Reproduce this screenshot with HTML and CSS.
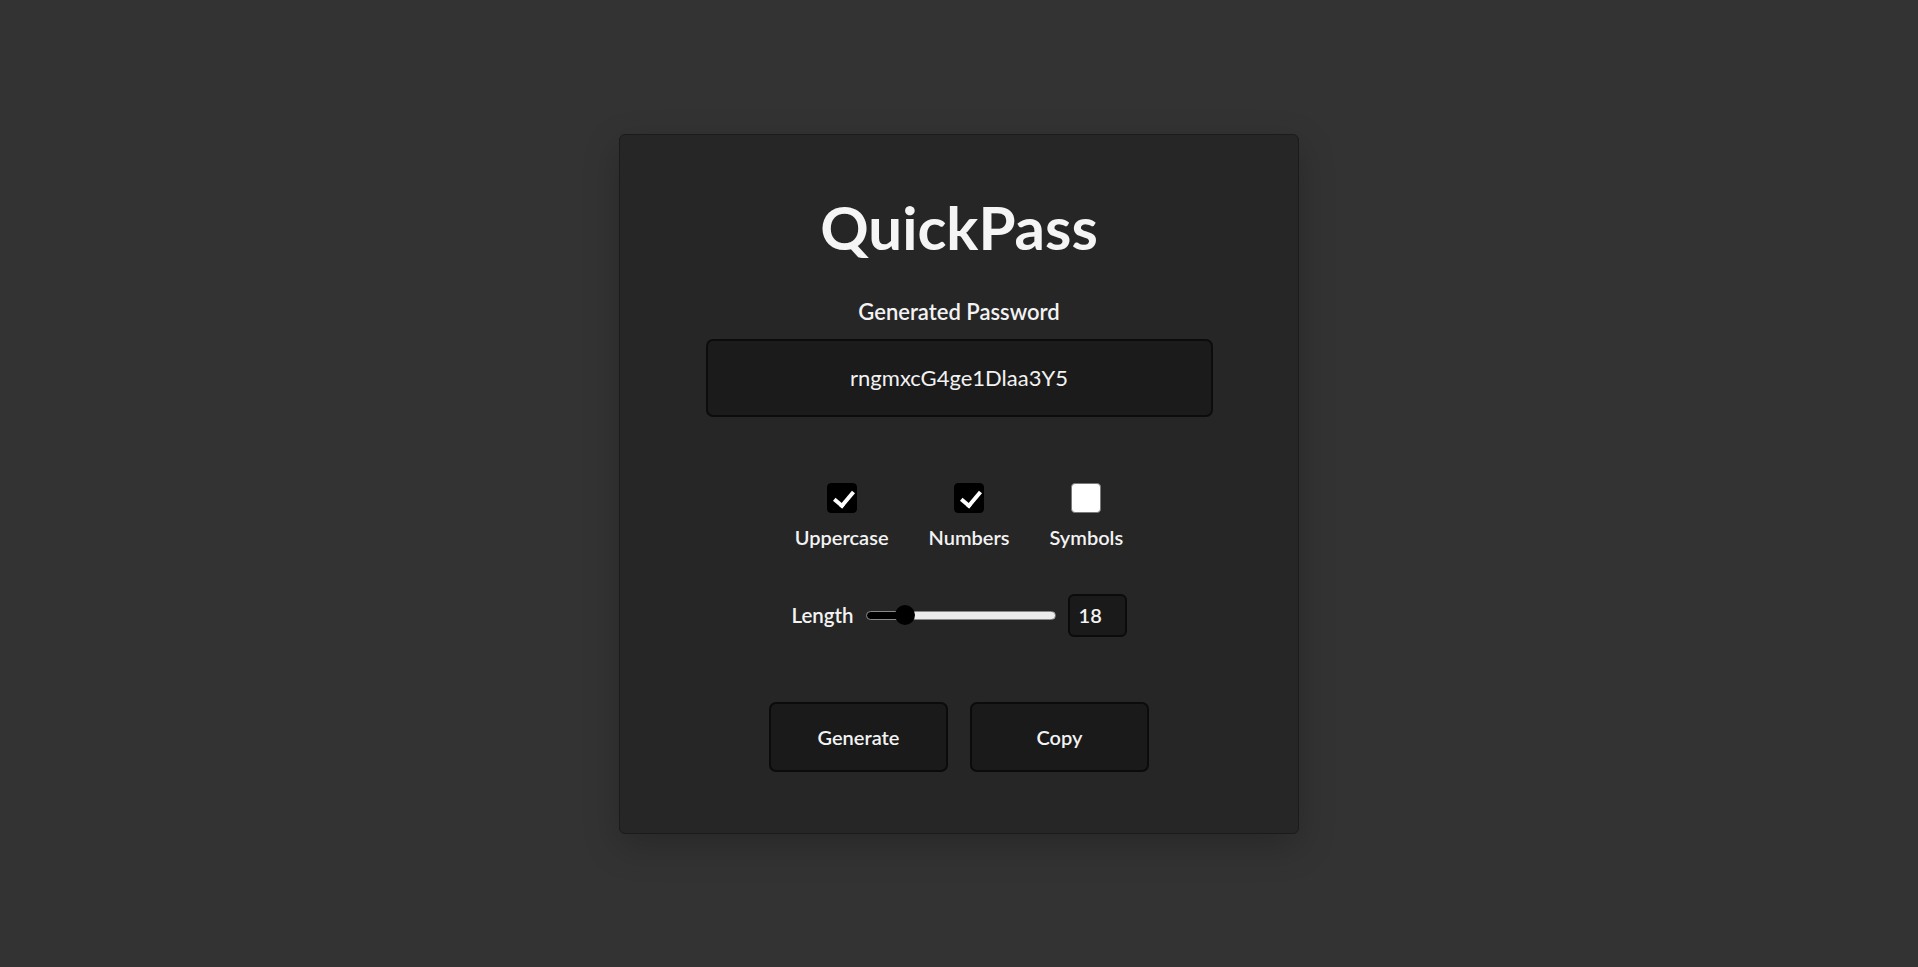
FILE: index.html
```html
<!DOCTYPE html>
<html lang="en">
<head>
<meta charset="utf-8">
<title>QuickPass</title>
<link rel="stylesheet" href="styles.css">
</head>
<body>
  <main class="card">
    <h1 class="title">QuickPass</h1>
    <p class="field-label">Generated Password</p>
    <div class="password-box">rngmxcG4ge1Dlaa3Y5</div>

    <div class="options">
      <label class="option">
        <input type="checkbox" class="check" checked>
        <span class="option-label">Uppercase</span>
      </label>
      <label class="option">
        <input type="checkbox" class="check" checked>
        <span class="option-label">Numbers</span>
      </label>
      <label class="option">
        <input type="checkbox" class="check">
        <span class="option-label">Symbols</span>
      </label>
    </div>

    <div class="length-row">
      <span class="length-label">Length</span>
      <input type="range" class="slider" min="8" max="68" value="18" style="--fill: 20%">
      <input type="number" class="length-input" value="18">
    </div>

    <div class="actions">
      <button class="btn" type="button">Generate</button>
      <button class="btn" type="button">Copy</button>
    </div>
  </main>
</body>
</html>
```

FILE: styles.css
```css
* {
  box-sizing: border-box;
}

html, body {
  margin: 0;
  padding: 0;
}

body {
  min-height: 100vh;
  background: #333333;
  display: flex;
  align-items: center;
  justify-content: center;
  font-family: "Lato", "Open Sans", sans-serif;
  color: #f3f3f3;
}

.card {
  width: 680px;
  background: #262626;
  border: 1px solid #1b1b1b;
  border-radius: 6px;
  box-shadow: 0 12px 36px rgba(0, 0, 0, 0.22);
  padding: 56px 0 61px;
  display: flex;
  flex-direction: column;
  align-items: center;
}

.title {
  margin: 0;
  font-size: 60px;
  font-weight: 700;
  line-height: 72px;
  color: #f5f5f5;
}

.field-label {
  margin: 36px 0 0;
  font-size: 22px;
  font-weight: 600;
  line-height: 26px;
}

.password-box {
  margin-top: 14px;
  width: 507px;
  height: 78px;
  background: #1b1b1b;
  border: 2px solid #0c0c0c;
  border-radius: 7px;
  display: flex;
  align-items: center;
  justify-content: center;
  font-size: 22px;
  font-weight: 400;
  color: #f2f2f2;
}

.options {
  margin-top: 66px;
  display: flex;
  justify-content: center;
  gap: 40px;
}

.option {
  display: flex;
  flex-direction: column;
  align-items: center;
  gap: 12px;
}

.check {
  appearance: none;
  -webkit-appearance: none;
  margin: 0;
  width: 30px;
  height: 30px;
  border-radius: 4px;
  background: #ffffff;
  border: 1px solid #7a7a7a;
  position: relative;
}

.check:checked {
  background: #000000;
  border-color: #000000;
}

.check:checked::after {
  content: "";
  position: absolute;
  left: 10px;
  top: 3px;
  width: 8px;
  height: 16px;
  border-right: 4px solid #ffffff;
  border-bottom: 4px solid #ffffff;
  transform: rotate(40deg);
}

.option-label {
  font-size: 20px;
  font-weight: 600;
  line-height: 24px;
}

.length-row {
  margin-top: 45px;
  display: flex;
  align-items: center;
  gap: 12px;
}

.length-label {
  font-size: 20.5px;
  font-weight: 600;
  line-height: 24px;
}

.slider {
  appearance: none;
  -webkit-appearance: none;
  margin: 0;
  width: 190px;
  height: 9px;
  border-radius: 5px;
  border: 1px solid #8a8a8a;
  background: linear-gradient(to right, #000000 0, #000000 var(--fill), #ececec var(--fill), #ececec 100%);
  outline: none;
}

.slider::-webkit-slider-thumb {
  -webkit-appearance: none;
  appearance: none;
  width: 20px;
  height: 20px;
  border-radius: 50%;
  background: #000000;
  border: none;
}

.length-input {
  width: 59px;
  height: 43px;
  background: #1a1a1a;
  border: 2px solid #0b0b0b;
  border-radius: 6px;
  color: #f3f3f3;
  font-family: inherit;
  font-size: 20px;
  font-weight: 600;
  padding: 0 0 0 9px;
  outline: none;
  -moz-appearance: textfield;
}

.length-input::-webkit-outer-spin-button,
.length-input::-webkit-inner-spin-button {
  -webkit-appearance: none;
  margin: 0;
}

.actions {
  margin-top: 65px;
  display: flex;
  gap: 22px;
}

.btn {
  width: 179px;
  height: 70px;
  background: #1a1a1a;
  border: 2px solid #0b0b0b;
  border-radius: 7px;
  color: #f3f3f3;
  font-family: inherit;
  font-size: 20px;
  font-weight: 600;
  cursor: pointer;
}
```
